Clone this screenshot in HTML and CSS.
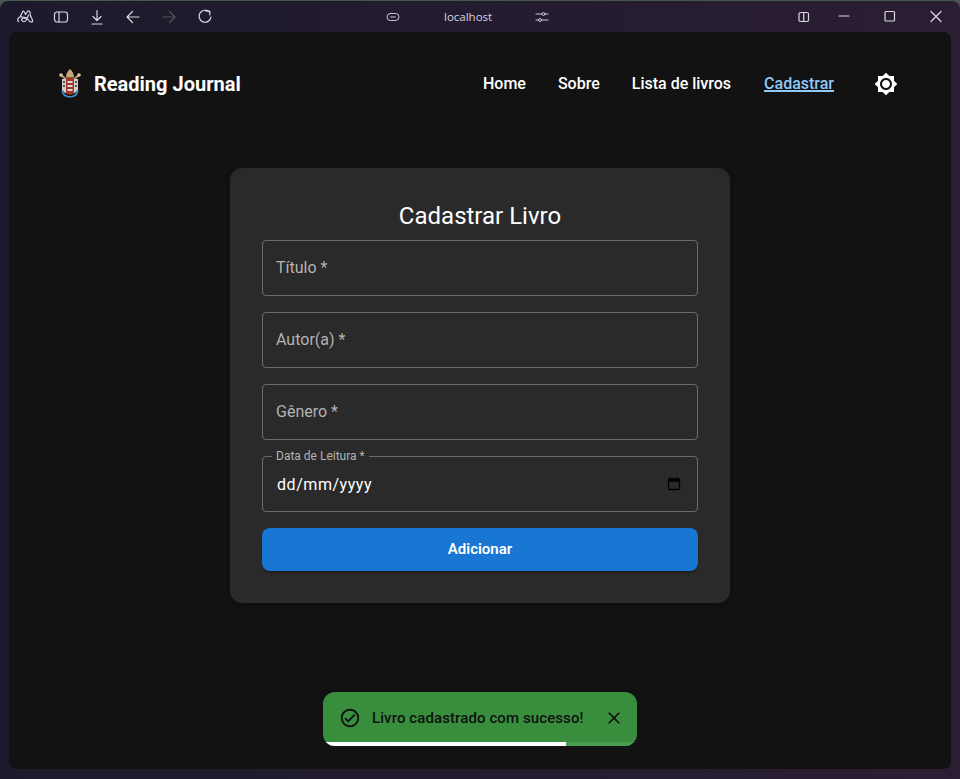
FILE: index.html
```html
<!DOCTYPE html>
<html lang="pt-BR">
<head>
<meta charset="utf-8">
<title>Reading Journal</title>
<link rel="stylesheet" href="styles.css">
</head>
<body>
<div class="window">
  <header class="chrome">
    <div class="chrome-left">
      <svg class="ci" viewBox="0 0 18 18"><path d="M2.500 13.500c-1.500-1.500-.5-3.500 1.500-4.500L7 3c1.500 0 2 2 2.500 3.500L11.500 3.500c1-1 2.500-.5 2.500 1 0 2 .5 4 1.500 5.500 1 1.500 1.500 3 .5 4-1.500.5-3-1-4-2.500-1.500-2-3.500-2.500-5-1.500-1 1-2 1.500-1 2.500 1 1.500 3 1.500 4 0 1-2 2-3.500 2.500-5.500M4 9c1.500-.5 3.500 0 5 1.500"/></svg>
      <svg class="ci" viewBox="0 0 18 18"><rect x="2.500" y="4" width="13" height="10" rx="2.500"/><path d="M7 4v10"/></svg>
      <svg class="ci" viewBox="0 0 18 18"><path d="M9 2.500v10M5 8.500l4 4 4-4M4 16h10"/></svg>
      <svg class="ci" viewBox="0 0 18 18"><path d="M15 9H3.500M8.500 3.500 3 9l5.500 5.500"/></svg>
      <svg class="ci ci-off" viewBox="0 0 18 18"><path d="M3 9h11.500M9.500 3.500 15 9l-5.500 5.500"/></svg>
      <svg class="ci" viewBox="0 0 18 18"><path d="M13.500 4.200A6 6 0 1 0 15 9M10 3.200h3.800V7"/></svg>
    </div>
    <div class="chrome-center">
      <svg class="ci ci-thin" viewBox="0 0 18 18"><rect x="3" y="5.500" width="12" height="7" rx="3.500"/><path d="M6.500 9h5"/></svg>
      <span class="host">localhost</span>
      <svg class="ci ci-thin" viewBox="0 0 18 18"><path d="M3 6h12M3 12h12"/><circle class="knob" cx="10.500" cy="6" r="1.500"/><circle class="knob" cx="7" cy="12" r="1.500"/></svg>
    </div>
    <div class="chrome-right">
      <svg class="ci ci-split" viewBox="0 0 18 18"><rect x="4" y="4.500" width="9.500" height="9" rx="1.500"/><path d="M8.750 4.500v9"/></svg>
      <svg class="ci ci-min" viewBox="0 0 18 18"><path d="M4 8h10"/></svg>
      <svg class="ci ci-max" viewBox="0 0 18 18"><rect x="4" y="3.500" width="9.500" height="9.500" rx="1"/></svg>
      <svg class="ci ci-close" viewBox="0 0 18 18"><path d="m4 3.500 10 10M14 3.500l-10 10"/></svg>
    </div>
  </header>

  <main class="panel">
    <nav class="topbar">
      <div class="brand">
        <svg class="crest" viewBox="0 0 24 32">
          <path d="M3 7 9 12M21 7l-6 5" stroke="#b89a72" stroke-width="2" fill="none"/>
          <circle cx="3" cy="7" r="1.800" fill="#d8c7a8"/><circle cx="21" cy="7" r="1.800" fill="#d8c7a8"/>
          <path d="M12 1c2.500 2 4 5 4 8.500H8C8 6 9.500 3 12 1z" fill="#c9a77c"/>
          <path d="M4 11h16v11l-3 3H7l-3-3z" fill="#cfcfcf"/>
          <path d="M8 10h8v15.500l-4 1.500-4-1.500z" fill="#a33428"/>
          <path d="M9.500 13h5v2h-5zM9.500 17h5v2h-5zM9.500 21h5v2h-5z" fill="#d9d9d9"/>
          <path d="M5 13h2v2H5zM5 17h2v2H5zM17 13h2v2h-2zM17 17h2v2h-2z" fill="#555"/>
          <path d="M3.500 22c0 5 3.500 7.500 8.500 7.500s8.500-2.500 8.500-7.500l-1.500.5c-.5 3-3 5.500-7 5.500S5.500 25.500 5 22.500z" fill="#3f8fd0"/>
        </svg>
        <span class="brand-name">Reading Journal</span>
      </div>
      <div class="links">
        <a class="link" href="#">Home</a>
        <a class="link" href="#">Sobre</a>
        <a class="link" href="#">Lista de livros</a>
        <a class="link link-active" href="#">Cadastrar</a>
        <svg class="theme" viewBox="0 0 24 24"><path d="M20 8.690V4h-4.690L12 .69 8.690 4H4v4.690L.69 12 4 15.310V20h4.690L12 23.310 15.310 20H20v-4.690L23.310 12 20 8.690zM12 18c-3.310 0-6-2.690-6-6s2.690-6 6-6 6 2.690 6 6-2.690 6-6 6zm0-10c-2.210 0-4 1.790-4 4s1.790 4 4 4 4-1.790 4-4-1.790-4-4-4z"/></svg>
      </div>
    </nav>

    <section class="card">
      <h1 class="title">Cadastrar Livro</h1>
      <div class="field"><span class="placeholder">Título *</span></div>
      <div class="field"><span class="placeholder">Autor(a) *</span></div>
      <div class="field"><span class="placeholder">Gênero *</span></div>
      <div class="field field-date">
        <span class="float-label">Data de Leitura *</span>
        <span class="date-value">dd/mm/yyyy</span>
        <svg class="calendar" viewBox="0 0 14 14"><path d="M3.500.5v2M10.500.500v2" stroke="#000" stroke-width="1.500"/><rect x="1.500" y="2" width="11" height="10.500" rx="1" fill="none" stroke="#000" stroke-width="1.300"/><rect x="1.500" y="2" width="11" height="2.800" fill="#000"/></svg>
      </div>
      <button class="submit" type="button">Adicionar</button>
    </section>

    <div class="toast">
      <svg class="toast-icon" viewBox="0 0 24 24"><path d="M16.590 7.580 10 14.170l-2.590-2.580L6 13l4 4 8-8zM12 2C6.480 2 2 6.480 2 12s4.480 10 10 10 10-4.480 10-10S17.520 2 12 2zm0 18c-4.420 0-8-3.580-8-8s3.580-8 8-8 8 3.580 8 8-3.580 8-8 8z"/></svg>
      <span class="toast-text">Livro cadastrado com sucesso!</span>
      <svg class="toast-close" viewBox="0 0 24 24"><path d="M19 6.410 17.590 5 12 10.590 6.410 5 5 6.410 10.590 12 5 17.590 6.410 19 12 13.410 17.590 19 19 17.590 13.410 12z"/></svg>
      <div class="toast-track"><div class="toast-progress" style="width:77.3%"></div></div>
    </div>
  </main>
</div>
</body>
</html>
```
FILE: styles.css
```css
* { box-sizing: border-box; }
html, body { margin: 0; height: 100%; }
body {
  background: #47564f;
  padding-top: 1px;
  overflow: hidden;
  font-family: Roboto, "Liberation Sans", sans-serif;
}
.window {
  height: 778px;
  display: flex;
  flex-direction: column;
  border-radius: 8px 8px 0 0;
  background: linear-gradient(90deg, #1c1a2c 0%, #231c2e 50%, #2b1e33 100%);
  padding: 0 9px 10px;
}
.chrome {
  height: 31px;
  flex: none;
  margin: 0 -9px;
  display: flex;
  align-items: center;
  color: #d5d3e2;
}
.ci {
  width: 18px;
  height: 18px;
  flex: none;
  fill: none;
  stroke: #d9d7e6;
  stroke-width: 1.200;
  stroke-linecap: round;
  stroke-linejoin: round;
}
.ci-thin { stroke-width: 1; stroke: #c9c7d8; }
.ci-off { stroke: #56535f; }
.knob { fill: #2a2233; }
.chrome-left { display: flex; gap: 18px; margin-left: 16px; }
.chrome-center { display: flex; align-items: center; margin-left: 170px; width: 165px; }
.host {
  font-family: "Open Sans", sans-serif;
  font-size: 11.500px;
  margin: 0 41px 0 42px;
  color: #d5d3e2;
}
.chrome-right { display: flex; margin-left: 246px; }
.ci-split { margin-right: 22px; }
.ci-min { margin-right: 28px; }
.ci-max { margin-right: 28px; }

.panel {
  flex: 1;
  position: relative;
  background: #121212;
  border-radius: 8px;
}
.topbar {
  height: 104px;
  padding: 0 53px 0 49px;
  display: flex;
  align-items: center;
  justify-content: space-between;
}
.brand { display: flex; align-items: center; gap: 12px; }
.crest { width: 24px; height: 32px; display: block; }
.brand-name { color: #fff; font-size: 20px; font-weight: 700; }
.links { display: flex; align-items: center; gap: 32px; }
.link { color: #fff; font-size: 16px; font-weight: 500; line-height: 22px; margin-top: -1px; text-decoration: none; }
.link-active { color: #90caf9; text-decoration: underline; text-decoration-thickness: 1.500px; margin-left: 1px; }
.theme { width: 24px; height: 24px; fill: #fff; margin-left: 8px; }

.card {
  width: 500px;
  margin: 32px auto 0;
  padding: 32px;
  background: #2a2a2a;
  border-radius: 12px;
  box-shadow: 0 2px 4px rgba(0,0,0,.35);
  display: flex;
  flex-direction: column;
  gap: 16px;
}
.title {
  margin: 0 0 -8px;
  color: #fff;
  font-size: 24px;
  font-weight: 400;
  line-height: 32px;
  text-align: center;
}
.field {
  position: relative;
  height: 56px;
  border: 1px solid #6b6b6b;
  border-radius: 4px;
  display: flex;
  align-items: center;
  padding: 0 13px;
}
.placeholder { color: #b3b3b3; font-size: 16px; line-height: 22px; margin-top: -1px; }
.float-label {
  position: absolute;
  left: 9px;
  top: -8px;
  padding: 0 4px;
  background: #2a2a2a;
  color: #b3b3b3;
  font-size: 12px;
  line-height: 14px;
}
.date-value { flex: 1; padding-left: 1px; color: #fff; font-size: 16px; letter-spacing: .55px; }
.calendar { width: 14px; height: 14px; margin-right: 3px; }
.submit {
  height: 43px;
  padding: 0 0 2px;
  border: 0;
  border-radius: 8px;
  background: #1976d2;
  color: #fff;
  font-family: inherit;
  font-size: 15px;
  font-weight: 600;
  box-shadow: 0 2px 2px rgba(0,0,0,.3);
}

.toast {
  position: absolute;
  left: 314px;
  top: 660px;
  width: 314px;
  height: 54px;
  display: flex;
  align-items: center;
  padding: 0 13px 2px 16px;
  background: #388e3c;
  border-radius: 12px;
  overflow: hidden;
  color: #111;
}
.toast-icon { width: 22px; height: 22px; fill: #111; flex: none; }
.toast-text { margin-left: 11px; flex: 1; font-size: 15px; letter-spacing: .1px; font-weight: 500; white-space: nowrap; }
.toast-close { width: 20px; height: 20px; fill: #111; flex: none; }
.toast-track {
  position: absolute;
  left: 0;
  right: 0;
  bottom: 0;
  height: 4px;
  background: #4b9e50;
}
.toast-progress { height: 100%; background: #fff; }
```
